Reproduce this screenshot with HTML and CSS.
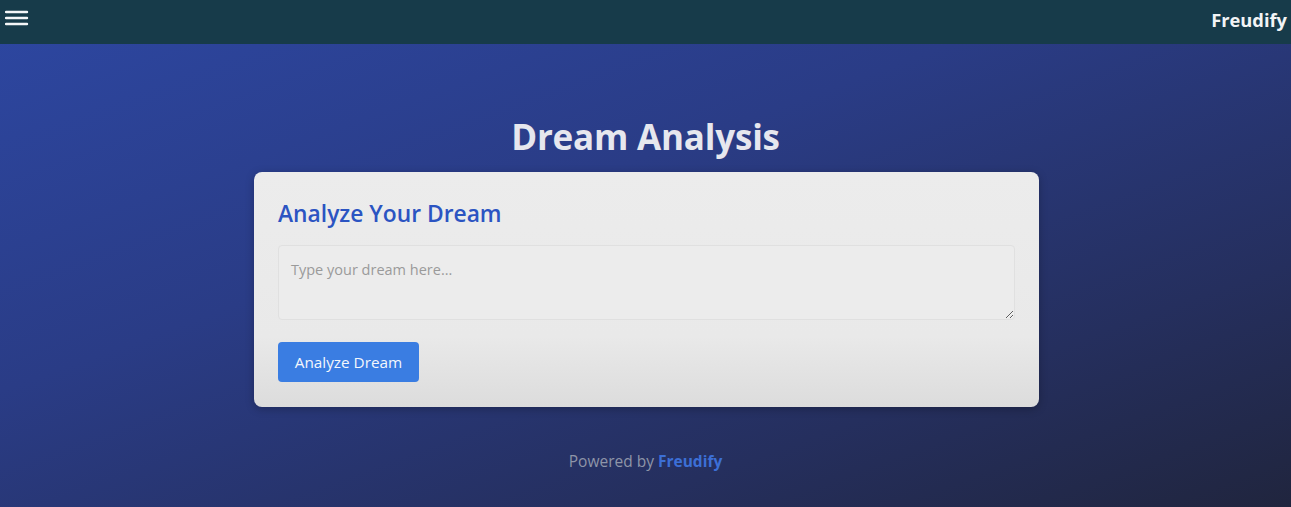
FILE: index.html
```html
<!DOCTYPE html>
<html lang="en">
<head>
<meta charset="utf-8">
<title>Freudify - Dream Analysis</title>
<link rel="stylesheet" href="styles.css">
</head>
<body>
<header class="topbar">
  <button class="menu-btn" aria-label="Menu">
    <svg width="24" height="16" viewBox="0 0 24 16"><path d="M1 2h21M1 8h21M1 14h21" stroke="#f4f6f8" stroke-width="2.4" stroke-linecap="round"/></svg>
  </button>
  <div class="brand">Freudify</div>
</header>
<main class="main">
  <h1 class="page-title">Dream Analysis</h1>
  <section class="card">
    <h2 class="card-title">Analyze Your Dream</h2>
    <textarea class="dream-input" placeholder="Type your dream here..."></textarea>
    <div class="actions">
      <button class="analyze-btn">Analyze Dream</button>
    </div>
  </section>
  <footer class="footer">Powered by <span class="footer-brand">Freudify</span></footer>
</main>
</body>
</html>
```
FILE: styles.css
```css
* { box-sizing: border-box; }
html, body { height: 100%; }
body {
  margin: 0;
  font-family: "Open Sans", "Noto Sans", sans-serif;
  background: linear-gradient(160deg, #2d47a2 0%, #2a3c86 40%, #252f5e 75%, #20253e 100%);
  color: #e9eaf0;
  min-height: 507px;
}
.topbar {
  height: 44px;
  background: #173b4a;
  display: flex;
  align-items: center;
  justify-content: space-between;
  padding: 0 4px 0 5px;
}
.menu-btn {
  background: none;
  border: 0;
  padding: 0;
  width: 24px;
  height: 16px;
  display: flex;
  margin-top: -8px;
}
.brand {
  font-weight: 700;
  font-size: 18.3px;
  color: #f2f4f6;
  margin-top: -6px;
}
.main {
  display: flex;
  flex-direction: column;
  align-items: center;
  padding-top: 68px;
}
.page-title {
  margin: 0;
  font-size: 35px;
  font-weight: 700;
  line-height: 50px;
  color: #e6e7ee;
  letter-spacing: -0.2px;
}
.card {
  margin-top: 10px;
  margin-left: 2px;
  width: 785px;
  height: 235px;
  border-radius: 8px;
  background: linear-gradient(180deg, #ececec 0%, #e9e9e9 70%, #dcdcdc 100%);
  padding: 24px;
  box-shadow: 0 2px 8px rgba(0,0,0,0.25);
  display: flex;
  flex-direction: column;
}
.card-title {
  margin: 0;
  font-size: 22.8px;
  font-weight: 600;
  line-height: 36px;
  color: #2b54c2;
}
.dream-input {
  margin-top: 13px;
  width: 100%;
  height: 75px;
  border: 1px solid #e0e0e0;
  border-radius: 4px;
  background: #ececec;
  padding: 14px 12px 12px;
  font-family: inherit;
  font-size: 14.5px;
  color: #555;
  resize: vertical;
}
.dream-input::placeholder { color: #9a9a9a; }
.actions {
  margin-top: 22px;
  display: flex;
}
.analyze-btn {
  width: 141px;
  height: 40px;
  border: 0;
  border-radius: 4px;
  background: #3a7de2;
  color: #f4f7fc;
  font-family: inherit;
  font-size: 15.3px;
}
.footer {
  margin-top: 43px;
  font-size: 15.5px;
  color: #8e95a8;
}
.footer-brand {
  font-weight: 700;
  color: #3c6fd6;
}
```
